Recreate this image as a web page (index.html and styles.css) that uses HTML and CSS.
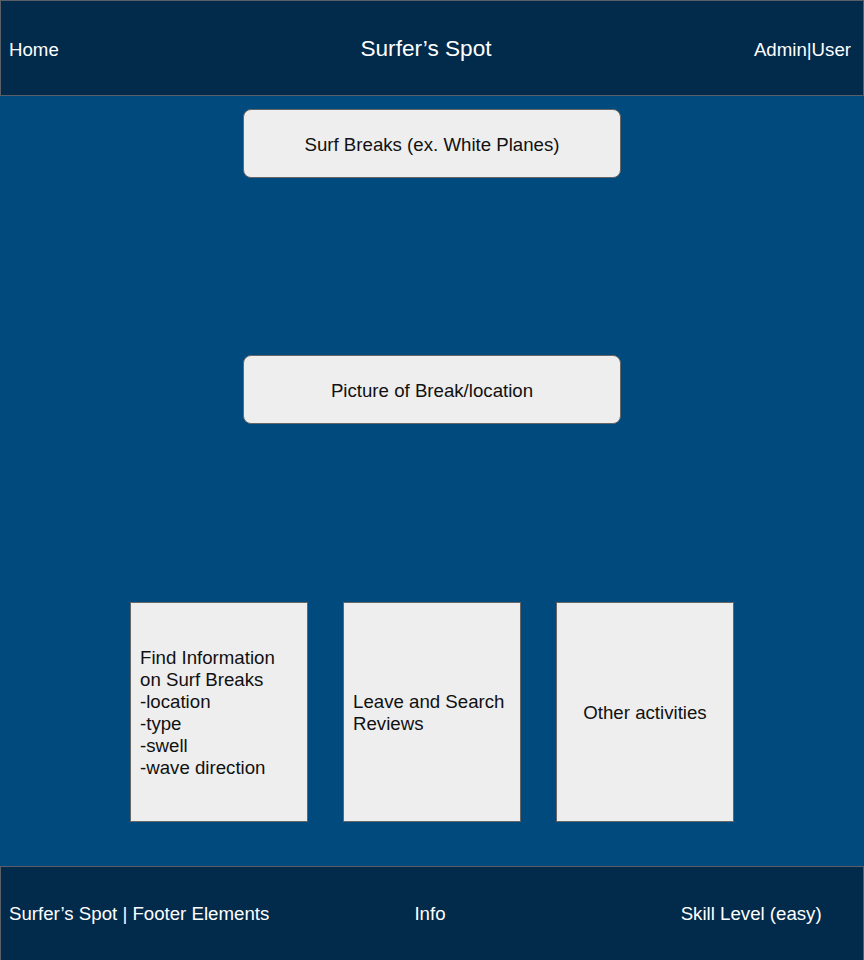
FILE: index.html
```html
<!DOCTYPE html>
<html>
<head>
<meta charset="utf-8">
<link rel="stylesheet" href="styles.css">
</head>
<body>
<header class="topbar">
  <div class="nav-left">Home</div>
  <div class="site-title">Surfer’s Spot</div>
  <div class="nav-right">Admin|User</div>
</header>
<main class="content">
  <div class="pill">Surf Breaks (ex. White Planes)</div>
  <div class="pill pill-second">Picture of Break/location</div>
  <div class="cards">
    <div class="card">Find Information<br>on Surf Breaks<br>-location<br>-type<br>-swell<br>-wave direction</div>
    <div class="card">Leave and Search<br>Reviews</div>
    <div class="card card-center">Other activities</div>
  </div>
</main>
<footer class="footbar">
  <div class="foot-left">Surfer’s Spot | Footer Elements</div>
  <div class="foot-mid">Info</div>
  <div class="foot-right">Skill Level (easy)</div>
</footer>
</body>
</html>
```
FILE: styles.css
```css
* { box-sizing: border-box; }
html, body { margin: 0; padding: 0; }
body {
  width: 864px;
  height: 960px;
  font-family: "Liberation Sans", Arial, sans-serif;
  background: #004a7e;
  overflow: hidden;
}
.topbar {
  height: 96px;
  background: #022a4b;
  border: 1px solid #5a5f66;
  display: grid;
  grid-template-columns: 1fr auto 1fr;
  align-items: center;
  padding: 0 12px 0 8px;
  color: #ffffff;
  font-size: 18.67px;
}
.nav-left { justify-self: start; padding-top: 3px; }
.site-title { font-size: 22.6px; padding-right: 8px; padding-top: 1px; }
.nav-right { justify-self: end; padding-top: 3px; }
.content {
  height: 770px;
  display: flex;
  flex-direction: column;
  align-items: center;
  padding-top: 13px;
}
.pill {
  width: 378px;
  height: 69px;
  background: #eeeeee;
  border: 1px solid #666666;
  border-radius: 8px;
  display: flex;
  align-items: center;
  justify-content: center;
  padding-top: 2px;
  font-size: 18.67px;
  color: #111111;
}
.pill-second { margin-top: 177px; }
.cards {
  margin-top: 178px;
  display: flex;
  gap: 35px;
}
.card {
  width: 178px;
  height: 220px;
  background: #eeeeee;
  border: 1px solid #666666;
  display: flex;
  align-items: center;
  padding: 2px 9px 0;
  font-size: 18.67px;
  line-height: 22px;
  color: #111111;
}
.card-center { justify-content: center; text-align: center; }
.footbar {
  height: 94px;
  background: #022a4b;
  border: 1px solid #5a5f66;
  border-bottom: none;
  display: grid;
  grid-template-columns: 1fr 1fr 1fr;
  align-items: center;
  color: #ffffff;
  font-size: 18.67px;
}
.foot-left { padding-left: 8px; }
.foot-mid { text-align: center; padding-right: 4px; }
.foot-right { padding-left: 105px; white-space: nowrap; }
```
